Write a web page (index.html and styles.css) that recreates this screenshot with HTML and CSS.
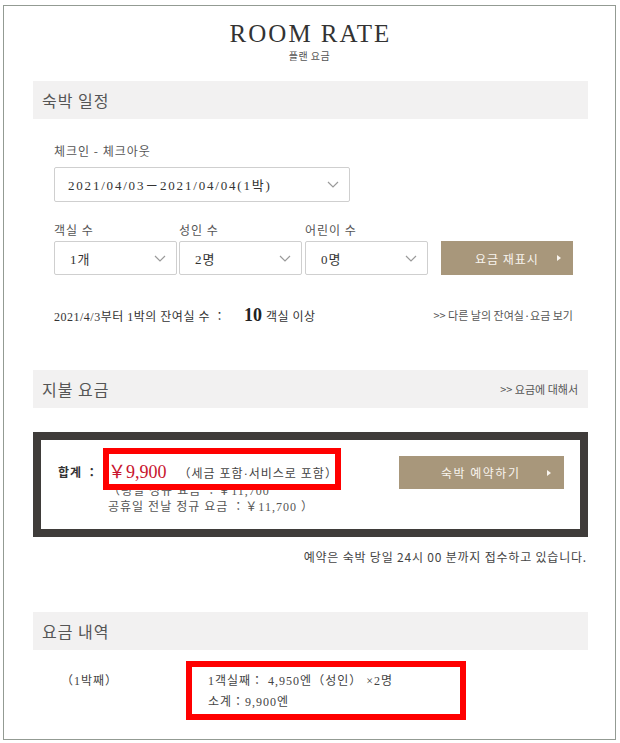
FILE: index.html
```html
<!DOCTYPE HTML>
<html>
<head>
  <title>ROOM RATE</title>
  <link rel="stylesheet" href="styles.css">
</head>
<body>
<div class="frame">
  <div class="page-head">
    <div class="page-title">ROOM RATE</div>
    <div class="page-sub">플랜 요금</div>
  </div>

  <div class="section">
    <div class="band">숙박 일정</div>
    <div class="stay-body">
      <div class="field-label">체크인 - 체크아웃</div>
      <div class="select date-select">
        <span>2021/04/03－2021/04/04(1박)</span>
        <svg class="chev" width="12" height="7" viewBox="0 0 12 7"><polyline points="1,1 6,6 11,1"/></svg>
      </div>

      <div class="count-row">
        <div class="count-col">
          <div class="field-label">객실 수</div>
          <div class="select">
            <span>1개</span>
            <svg class="chev" width="12" height="7" viewBox="0 0 12 7"><polyline points="1,1 6,6 11,1"/></svg>
          </div>
        </div>
        <div class="count-col">
          <div class="field-label">성인 수</div>
          <div class="select">
            <span>2명</span>
            <svg class="chev" width="12" height="7" viewBox="0 0 12 7"><polyline points="1,1 6,6 11,1"/></svg>
          </div>
        </div>
        <div class="count-col col-last">
          <div class="field-label">어린이 수</div>
          <div class="select">
            <span>0명</span>
            <svg class="chev" width="12" height="7" viewBox="0 0 12 7"><polyline points="1,1 6,6 11,1"/></svg>
          </div>
        </div>
        <div class="btn btn-refresh">
          <span>요금 재표시</span>
          <span class="arrow"></span>
        </div>
      </div>

      <div class="vacancy">
        <div class="vacancy-text">2021/4/3부터 1박의 잔여실 수 ：<b class="num">10</b>객실 이상</div>
        <div class="small-link">&gt;&gt; 다른 날의 잔여실·요금 보기</div>
      </div>
    </div>
  </div>

  <div class="section">
    <div class="band band-split">
      <span>지불 요금</span>
      <span class="small-link">&gt;&gt; 요금에 대해서</span>
    </div>
    <div class="total-box">
      <div class="total-inner">
        <div class="total-label">합계 ：</div>
        <div class="total-lines">
          <div class="price-line"><span class="price">￥9,900</span><span class="tax">（세금 포함·서비스로 포함）</span></div>
          <div class="regular">（평일 정규 요금 ：￥11,700</div>
          <div class="regular">공휴일 전날 정규 요금 ：￥11,700 ）</div>
          <div class="mark mark-price"></div>
        </div>
        <div class="btn btn-book">
          <span>숙박 예약하기</span>
          <span class="arrow"></span>
        </div>
      </div>
    </div>
    <div class="note">예약은 숙박 당일 24시 00 분까지 접수하고 있습니다.</div>
  </div>

  <div class="section">
    <div class="band">요금 내역</div>
    <div class="detail">
      <div class="detail-night">（1박째）</div>
      <div class="detail-lines">
        <div>1객실째： 4,950엔（성인） ×2명</div>
        <div>소계：9,900엔</div>
        <div class="mark mark-detail"></div>
      </div>
    </div>
  </div>
</div>
</body>
</html>
```

FILE: styles.css
```css
body {
  margin: 0;
  background: #fff;
  color: #444;
  font-family: "Liberation Serif", "Noto Sans CJK KR", serif;
  font-size: 12px;
  letter-spacing: 1px;
}

.frame {
  margin: 5px 4px 0 3px;
  height: 733px;
  border: 1px solid #939b93;
  overflow: hidden;
}

.page-head {
  padding-top: 13px;
  text-align: center;
  color: #333;
}

.page-title {
  font-size: 25px;
  line-height: 30px;
  letter-spacing: 2px;
  padding-left: 2px;
}

.page-sub {
  font-family: "Noto Sans CJK KR", sans-serif;
  font-size: 10px;
  line-height: 14px;
  letter-spacing: 0.5px;
  color: #555;
}

.section {
  margin-left: 29px;
  width: 555px;
}

.band {
  height: 38px;
  line-height: 38px;
  padding: 0 10px 0 9px;
  background: #f2f1f1;
  font-family: "Noto Sans CJK KR", sans-serif;
  font-size: 16px;
  letter-spacing: 1px;
  color: #555;
}

.section:nth-child(2) .band {
  margin-top: 18px;
}

.band-split {
  display: flex;
  justify-content: space-between;
  align-items: center;
  margin-top: 45px;
}

.small-link {
  font-family: "Noto Sans CJK KR", sans-serif;
  font-size: 11px;
  letter-spacing: 0;
  color: #555;
}

.stay-body {
  padding: 24px 15px 0 21px;
}

.field-label {
  font-family: "Noto Sans CJK KR", sans-serif;
  line-height: 16px;
  color: #555;
}

.select {
  display: flex;
  align-items: center;
  justify-content: space-between;
  box-sizing: border-box;
  height: 34px;
  padding: 0 10px 0 15px;
  border: 1px solid #cfcfcf;
  border-radius: 2px;
  color: #333;
  font-size: 13px;
}

.chev polyline {
  fill: none;
  stroke: #9a9a9a;
  stroke-width: 1.2;
}

.date-select {
  width: 296px;
  height: 35px;
  margin-top: 8px;
  padding-left: 13px;
  letter-spacing: 1.8px;
}

.count-row {
  display: flex;
  align-items: flex-end;
  margin-top: 20px;
}

.count-col {
  width: 123px;
  margin-right: 2px;
}

.count-col .select {
  margin-top: 3px;
}

.col-last {
  margin-left: 1px;
  margin-right: 13px;
}

.btn {
  display: flex;
  align-items: center;
  box-sizing: border-box;
  background: #a8977b;
  color: #f8f4ee;
  font-family: "Noto Sans CJK KR", sans-serif;
  letter-spacing: 1px;
}

.btn .arrow {
  margin-left: auto;
  width: 0;
  height: 0;
  border-top: 3px solid transparent;
  border-bottom: 3px solid transparent;
  border-left: 4px solid #f8f4ee;
}

.btn-refresh {
  width: 132px;
  height: 34px;
  padding: 0 12px 0 34px;
}

.vacancy {
  display: flex;
  justify-content: space-between;
  align-items: center;
  height: 20px;
  margin-top: 30px;
  color: #333;
}

.vacancy-text {
  letter-spacing: 0.5px;
}

.num {
  font-size: 18px;
  letter-spacing: 0;
  margin: 0 4px 0 18px;
  color: #222;
}

.total-box {
  margin-top: 24px;
  border: 8px solid #3f3c3a;
}

.total-inner {
  position: relative;
  display: flex;
  align-items: flex-start;
  height: 89px;
  background: #fff;
}

.total-label {
  width: 50px;
  padding: 24px 0 0 17px;
  font-family: "Noto Sans CJK KR", sans-serif;
  font-weight: bold;
  color: #333;
  line-height: 16px;
}

.total-lines {
  padding-top: 21px;
  color: #444;
}

.price-line {
  height: 22px;
  line-height: 22px;
}

.price {
  font-size: 18px;
  letter-spacing: 0;
  color: #c8142d;
  margin-right: 12px;
}

.tax {
  color: #444;
}

.regular {
  line-height: 16px;
  color: #555;
}

.mark {
  position: absolute;
  border: 6px solid #ff0000;
}

.mark-price {
  left: 62px;
  top: 8px;
  width: 226px;
  height: 30px;
}

.btn-book {
  width: 165px;
  height: 33px;
  margin: 16px 16px 0 auto;
  padding: 0 13px 0 42px;
  letter-spacing: 1.5px;
}

.note {
  margin-top: 12px;
  padding-right: 1px;
  text-align: right;
  line-height: 16px;
  font-family: "Noto Sans CJK KR", sans-serif;
  letter-spacing: 0.8px;
  color: #444;
}

.section:last-child .band {
  margin-top: 47px;
}

.detail {
  position: relative;
  display: flex;
  padding: 21px 0 0 28px;
  line-height: 21px;
  color: #444;
}

.detail-night {
  width: 147px;
}

.mark-detail {
  left: 153px;
  top: 11px;
  width: 268px;
  height: 47px;
}
```
